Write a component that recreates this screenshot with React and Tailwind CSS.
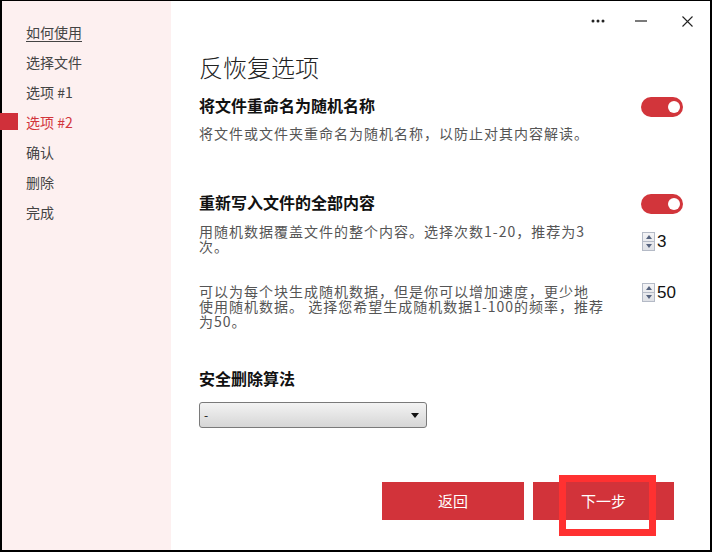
const FONT = '"Noto Sans CJK SC", "Liberation Sans", sans-serif';

const steps = ['如何使用', '选择文件', '选项 #1', '选项 #2', '确认', '删除', '完成'];

function Toggle() {
  return (
    <div className="mt-[2px] flex h-[20px] w-[42px] shrink-0 items-center justify-end rounded-full bg-[#d2353b] pr-[3px]">
      <div className="h-[12px] w-[12px] rounded-full bg-white" />
    </div>
  );
}

function Spinner({ value }) {
  return (
    <div className="flex items-center">
      <div className="flex h-[19px] w-[13px] flex-col border border-[#b4bac6] bg-gradient-to-b from-[#f4f4f6] to-[#dfe1e6]">
        <div className="flex flex-1 items-center justify-center border-b border-[#b4bac6]">
          <svg width="6" height="4" viewBox="0 0 6 4">
            <path d="M0 4 L3 0 L6 4 Z" fill="#56637e" />
          </svg>
        </div>
        <div className="flex flex-1 items-center justify-center">
          <svg width="6" height="4" viewBox="0 0 6 4">
            <path d="M0 0 L3 4 L6 0 Z" fill="#56637e" />
          </svg>
        </div>
      </div>
      <span className="ml-[2px] text-[17px] leading-[19px] text-[#111]" style={{ fontFamily: '"Liberation Sans", sans-serif' }}>
        {value}
      </span>
    </div>
  );
}

export default function App() {
  return (
    <div
      className="flex h-[552px] w-[712px] border-x-2 border-t border-b-2 border-black bg-white"
      style={{ fontFamily: FONT }}
    >
      {/* sidebar */}
      <div className="w-[169px] shrink-0 bg-[#fdf0f0] pt-[16px] pl-[24px]">
        {steps.map((s, i) => (
          <div
            key={s}
            className={`relative h-[30px] text-[14px] leading-[30px] ${
              i === 3 ? 'text-[#d2353b]' : 'text-[#444]'
            } ${i === 0 ? 'underline underline-offset-[3px]' : ''}`}
          >
            {i === 3 && <div className="absolute top-[6px] left-[-26px] h-[17px] w-[18px] bg-[#d0303a]" />}
            {s}
          </div>
        ))}
      </div>

      {/* main */}
      <div className="flex flex-1 flex-col pr-[27px] pl-[28px]">
        <div className="-mr-[10px] flex h-[40px] items-center justify-end">
          <svg width="14" height="4" viewBox="0 0 14 4">
            <circle cx="2" cy="2" r="1.5" fill="#222" />
            <circle cx="7" cy="2" r="1.5" fill="#222" />
            <circle cx="12" cy="2" r="1.5" fill="#222" />
          </svg>
          <svg className="ml-[30px]" width="12" height="2" viewBox="0 0 12 2">
            <path d="M0 1 H12" stroke="#222" strokeWidth="1.2" />
          </svg>
          <svg className="ml-[35px]" width="11" height="11" viewBox="0 0 11 11">
            <path d="M0.5 0.5 L10.5 10.5 M10.5 0.5 L0.5 10.5" stroke="#222" strokeWidth="1.1" />
          </svg>
        </div>

        <div className="mt-[10px] text-[24px] leading-[32px] font-light text-[#222]">反恢复选项</div>

        <div className="mt-[12px] flex items-start justify-between">
          <div className="text-[16px] leading-[20px] font-bold text-[#111]">将文件重命名为随机名称</div>
          <Toggle />
        </div>
        <div className="mt-[6px] text-[14px] leading-[20px] tracking-[1px] text-[#555]">
          将文件或文件夹重命名为随机名称，以防止对其内容解读。
        </div>

        <div className="mt-[49px] flex items-start justify-between">
          <div className="text-[16px] leading-[20px] font-bold text-[#111]">重新写入文件的全部内容</div>
          <Toggle />
        </div>
        <div className="mt-[10px] flex items-start">
          <div className="w-[443px] shrink-0 text-[14px] leading-[15px] tracking-[1px] whitespace-nowrap text-[#555]">
            用随机数据覆盖文件的整个内容。选择次数1-20，推荐为3
            <br />
            次。
          </div>
          <div className="mt-[8px]">
            <Spinner value="3" />
          </div>
        </div>

        <div className="mt-[30px] flex items-start">
          <div className="w-[443px] shrink-0 text-[14px] leading-[15px] tracking-[1px] whitespace-nowrap text-[#555]">
            可以为每个块生成随机数据，但是你可以增加速度，更少地
            <br />
            使用随机数据。 选择您希望生成随机数据1-100的频率，推荐
            <br />
            为50。
          </div>
          <div className="-mt-[1px]">
            <Spinner value="50" />
          </div>
        </div>

        <div className="mt-[39px] text-[16px] leading-[20px] font-bold text-[#111]">安全删除算法</div>

        <div className="mt-[14px] flex h-[26px] w-[228px] items-center justify-between rounded-[3px] border border-[#7a7a7a] bg-gradient-to-b from-[#f3f3f3] to-[#d6d6d6] pr-[7px] pl-[4px]">
          <span className="text-[12px] text-[#111]">-</span>
          <svg width="8" height="5" viewBox="0 0 8 5">
            <path d="M0 0 L8 0 L4 5 Z" fill="#111" />
          </svg>
        </div>

        <div className="mt-[54px] mr-[9px] flex justify-end gap-[9px]">
          <button className="h-[38px] w-[142px] bg-[#d2333a] text-[15px] text-white">返回</button>
          <button className="relative h-[38px] w-[141px] bg-[#d2333a] text-[15px] text-white">
            下一步
            <div className="absolute top-[-7px] left-[26px] h-[61px] w-[97px] border-[7px] border-[#ff3131]" />
          </button>
        </div>
      </div>
    </div>
  );
}
